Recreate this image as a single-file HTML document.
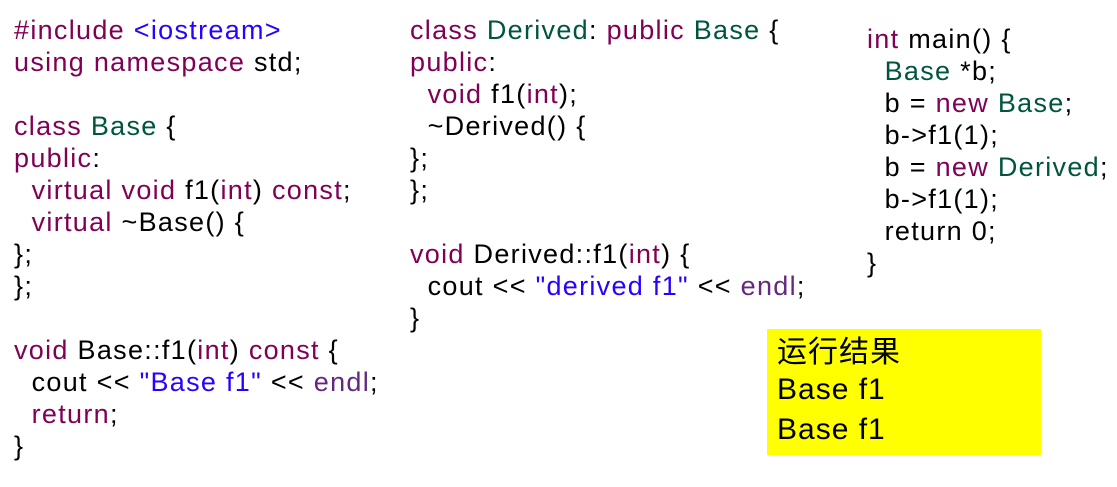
<!DOCTYPE html><html><head><meta charset="utf-8"><style>
body{margin:0;width:1117px;height:487px;background:#fff;position:relative;overflow:hidden;font-family:"Liberation Sans","Noto Sans CJK SC",sans-serif;}
pre{position:absolute;margin:0;font-family:inherit;font-size:27px;letter-spacing:1.3px;line-height:32px;color:#000;}
.k{color:#7f0055}.c{color:#00553f}.s{color:#2a00ff}.e{color:#642880}
.box{position:absolute;left:767px;top:329px;width:274px;height:126px;background:#ffff00;}
.box div{position:absolute;left:10px;font-size:30px;line-height:38px;color:#000;letter-spacing:1px}
</style></head><body>
<pre style="left:14px;top:14px"><span class="k">#include</span> <span class="s">&lt;iostream&gt;</span>
<span class="k">using namespace</span> std;

<span class="k">class</span> <span class="c">Base</span> {
<span class="k">public</span>:
  <span class="k">virtual void</span> f1(<span class="k">int</span>) <span class="k">const</span>;
  <span class="k">virtual</span> ~Base() {
};
};

<span class="k">void</span> Base::f1(<span class="k">int</span>) <span class="k">const</span> {
  cout &lt;&lt; <span class="s">"Base f1"</span> &lt;&lt; <span class="e">endl</span>;
  <span class="k">return</span>;
}</pre>
<pre style="left:410px;top:14px"><span class="k">class</span> <span class="c">Derived</span>: <span class="k">public</span> <span class="c">Base</span> {
<span class="k">public</span>:
  <span class="k">void</span> f1(<span class="k">int</span>);
  ~Derived() {
};
};

<span class="k">void</span> Derived::f1(<span class="k">int</span>) {
  cout &lt;&lt; <span class="s">"derived f1"</span> &lt;&lt; <span class="e">endl</span>;
}</pre>
<pre style="left:867px;top:23px"><span class="k">int</span> main() {
  <span class="c">Base</span> *b;
  b = <span class="k">new</span> <span class="c">Base</span>;
  b-&gt;f1(1);
  b = <span class="k">new</span> <span class="c">Derived</span>;
  b-&gt;f1(1);
  return 0;
}</pre>
<div class="box"><div style="top:5px">运行结果</div><div style="top:42px">Base f1</div><div style="top:82px">Base f1</div></div>
</body></html>
